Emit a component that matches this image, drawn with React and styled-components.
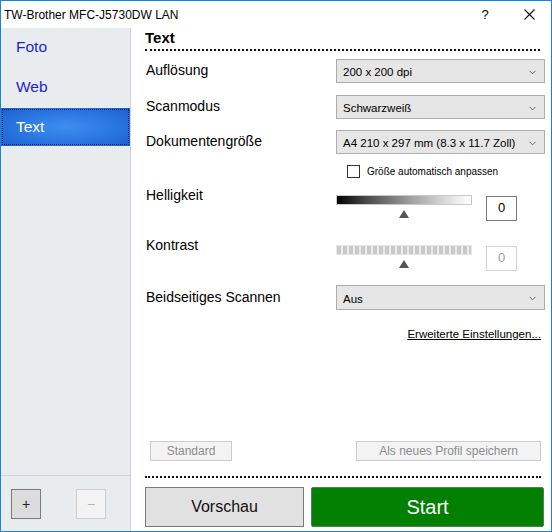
import React from "react";
import styled, { createGlobalStyle } from "styled-components";

const GlobalStyle = createGlobalStyle`
    html, body {
        margin: 0;
        padding: 0;
        background: #ffffff;
    }
    * {
        box-sizing: border-box;
    }
`;

const Window = styled.div`
    width: 552px;
    height: 532px;
    border: 1px solid #1883d7;
    display: flex;
    flex-direction: column;
    font-family: "Liberation Sans", Arial, sans-serif;
    color: #000;
    background: #fff;
    overflow: hidden;
`;

const TitleBar = styled.div`
    height: 27px;
    display: flex;
    align-items: center;
    padding-left: 3px;
    font-size: 12px;
`;

const Title = styled.div`
    flex: 1;
`;

const TitleButton = styled.div`
    width: ${(p) => p.w}px;
    height: 27px;
    display: flex;
    align-items: center;
    justify-content: center;
    font-size: 13px;
`;

const Body = styled.div`
    flex: 1;
    display: flex;
    min-height: 0;
`;

const Sidebar = styled.div`
    width: 130px;
    background: #e9ecef;
    border-right: 1px solid #cfd2d6;
    display: flex;
    flex-direction: column;
`;

const NavList = styled.div`
    flex: 1;
`;

const NavItem = styled.div`
    position: relative;
    height: 38px;
    margin-bottom: 2px;
    display: flex;
    align-items: center;
    padding-left: 15px;
    font-size: 15.5px;
    color: ${(p) => (p.active ? "#ffffff" : "#1f1fd0")};
    background: ${(p) =>
        p.active
            ? "radial-gradient(ellipse at 50% 50%, #3d8ef0 0%, #2a76e0 55%, #1b5fcb 100%)"
            : "transparent"};
    ${(p) =>
        p.active &&
        `
        &::after {
            content: "";
            position: absolute;
            inset: 1px;
            border: 1px dotted #0d2c6e;
        }
    `}
`;

const SideFooter = styled.div`
    height: 56px;
    border-top: 1px solid #d2d5d9;
    display: flex;
    align-items: flex-start;
    padding: 13px 0 0 10px;
    gap: 35px;
`;

const SquareButton = styled.div`
    width: 30px;
    height: 30px;
    display: flex;
    align-items: center;
    justify-content: center;
    font-size: 14px;
    background: ${(p) => (p.disabled ? "#f3f3f3" : "#dcdcdc")};
    border: 1px solid ${(p) => (p.disabled ? "#cfcfcf" : "#7a7a7a")};
    color: ${(p) => (p.disabled ? "#b5b5b5" : "#222")};
`;

const Main = styled.div`
    flex: 1;
    display: flex;
    flex-direction: column;
    padding: 0 6px 4px 14px;
`;

const Heading = styled.div`
    height: 23px;
    margin-right: 5px;
    font-size: 15px;
    font-weight: bold;
    line-height: 20px;
    border-bottom: 2px dotted #111;
`;

const Row = styled.div`
    display: flex;
    align-items: ${(p) => (p.top ? "flex-start" : "center")};
    height: ${(p) => p.h}px;
    margin-top: ${(p) => p.mt}px;
`;

const Label = styled.div`
    width: 191px;
    padding-left: 1px;
    font-size: 14px;
    line-height: 18px;
    margin-top: ${(p) => (p.top ? 0 : -2)}px;
`;

const Select = styled.div`
    flex: 1;
    height: 100%;
    display: flex;
    align-items: center;
    justify-content: space-between;
    padding: 2px 8px 0 6px;
    background: #e6e6e6;
    border: 1px solid #adadad;
    font-size: 11.5px;
    white-space: nowrap;
`;

const Chevron = () => (
    <svg width="7" height="5" viewBox="0 0 7 5">
        <path d="M0.5 0.8 L3.5 3.8 L6.5 0.8" fill="none" stroke="#666" strokeWidth="1" />
    </svg>
);

const CheckRow = styled.div`
    display: flex;
    align-items: center;
    height: 13px;
    margin-top: 11px;
    padding-left: 202px;
    gap: 7px;
    font-size: 10px;
`;

const CheckBox = styled.div`
    width: 13px;
    height: 13px;
    border: 1px solid #333;
    background: #fff;
`;

const SliderWrap = styled.div`
    width: 136px;
    padding-top: 9px;
    display: flex;
    flex-direction: column;
    align-items: center;
`;

const Bar = styled.div`
    width: 136px;
    height: 10px;
    border: 1px solid ${(p) => (p.striped ? "#e6e6e6" : "#c8c8c8")};
    background: ${(p) =>
        p.striped
            ? "repeating-linear-gradient(90deg, #c9c9c9 0 4px, #ececec 4px 6px)"
            : "linear-gradient(90deg, #000 0%, #444 20%, #a0a0a0 55%, #eee 90%, #fff 100%)"};
`;

const Thumb = styled.div`
    width: 0;
    height: 0;
    margin-top: 5px;
    margin-left: -1px;
    border-left: 5px solid transparent;
    border-right: 5px solid transparent;
    border-bottom: 8px solid #555;
`;

const ValueBox = styled.div`
    width: 31px;
    height: 25px;
    margin-left: 14px;
    margin-top: 10px;
    display: flex;
    justify-content: center;
    padding-top: 3px;
    font-size: 13px;
    border: 1px solid ${(p) => (p.disabled ? "#d3d3d3" : "#7a7a7a")};
    color: ${(p) => (p.disabled ? "#a0a0a0" : "#000")};
`;

const LinkRow = styled.div`
    display: flex;
    justify-content: flex-end;
    margin-top: 16px;
    margin-right: 4px;
    font-size: 11.5px;
    line-height: 16px;
    text-decoration: underline;
`;

const Spacer = styled.div`
    flex: 1;
`;

const ProfileRow = styled.div`
    display: flex;
    justify-content: space-between;
    padding: 0 4px 0 5px;
`;

const SmallButton = styled.div`
    width: ${(p) => p.w}px;
    height: 20px;
    display: flex;
    align-items: center;
    justify-content: center;
    font-size: 12px;
    color: #8c8c8c;
    background: #f3f3f3;
    border: 1px solid #cccccc;
`;

const Divider = styled.div`
    margin: 15px 4px 0 0;
    border-top: 2px dotted #111;
`;

const ActionRow = styled.div`
    display: flex;
    gap: 7px;
    margin-top: 9px;
    height: 40px;
`;

const ActionButton = styled.div`
    width: ${(p) => p.w}px;
    display: flex;
    align-items: center;
    justify-content: center;
    font-size: ${(p) => (p.primary ? 20 : 16)}px;
    color: ${(p) => (p.primary ? "#ffffff" : "#111")};
    background: ${(p) => (p.primary ? "#007f00" : "#e1e1e1")};
    border: 1px solid ${(p) => (p.primary ? "#5a7a5a" : "#7a7a7a")};
    border-radius: ${(p) => (p.primary ? 2 : 0)}px;
`;

function SelectRow({ label, value, mt, h }) {
    return (
        <Row mt={mt} h={h}>
            <Label>{label}</Label>
            <Select>
                <span>{value}</span>
                <Chevron />
            </Select>
        </Row>
    );
}

function SliderRow({ label, mt, striped, disabled }) {
    return (
        <Row mt={mt} h={36} top>
            <Label top>{label}</Label>
            <SliderWrap>
                <Bar striped={striped} />
                <Thumb />
            </SliderWrap>
            <ValueBox disabled={disabled}>0</ValueBox>
        </Row>
    );
}

export default function App() {
    return (
        <>
            <GlobalStyle />
            <Window>
                <TitleBar>
                    <Title>TW-Brother MFC-J5730DW LAN</Title>
                    <TitleButton w={44}>?</TitleButton>
                    <TitleButton w={44}>
                        <svg width="11" height="11" viewBox="0 0 11 11">
                            <path d="M0.5 0.5 L10.5 10.5 M10.5 0.5 L0.5 10.5" stroke="#111" strokeWidth="1.1" />
                        </svg>
                    </TitleButton>
                </TitleBar>
                <Body>
                    <Sidebar>
                        <NavList>
                            <NavItem>Foto</NavItem>
                            <NavItem>Web</NavItem>
                            <NavItem active>Text</NavItem>
                        </NavList>
                        <SideFooter>
                            <SquareButton>+</SquareButton>
                            <SquareButton disabled>−</SquareButton>
                        </SideFooter>
                    </Sidebar>
                    <Main>
                        <Heading>Text</Heading>
                        <SelectRow label="Auflösung" value="200 x 200 dpi" mt={8} h={24} />
                        <SelectRow label="Scanmodus" value="Schwarzweiß" mt={12} h={24} />
                        <SelectRow label="Dokumentengröße" value="A4 210 x 297 mm (8.3 x 11.7 Zoll)" mt={11} h={24} />
                        <CheckRow>
                            <CheckBox />
                            <span>Größe automatisch anpassen</span>
                        </CheckRow>
                        <SliderRow label="Helligkeit" mt={8} />
                        <SliderRow label="Kontrast" mt={14} striped disabled />
                        <SelectRow label="Beidseitiges Scannen" value="Aus" mt={13} h={25} />
                        <LinkRow>Erweiterte Einstellungen...</LinkRow>
                        <Spacer />
                        <ProfileRow>
                            <SmallButton w={82}>Standard</SmallButton>
                            <SmallButton w={185}>Als neues Profil speichern</SmallButton>
                        </ProfileRow>
                        <Divider />
                        <ActionRow>
                            <ActionButton w={159}>Vorschau</ActionButton>
                            <ActionButton w={233} primary>Start</ActionButton>
                        </ActionRow>
                    </Main>
                </Body>
            </Window>
        </>
    );
}
